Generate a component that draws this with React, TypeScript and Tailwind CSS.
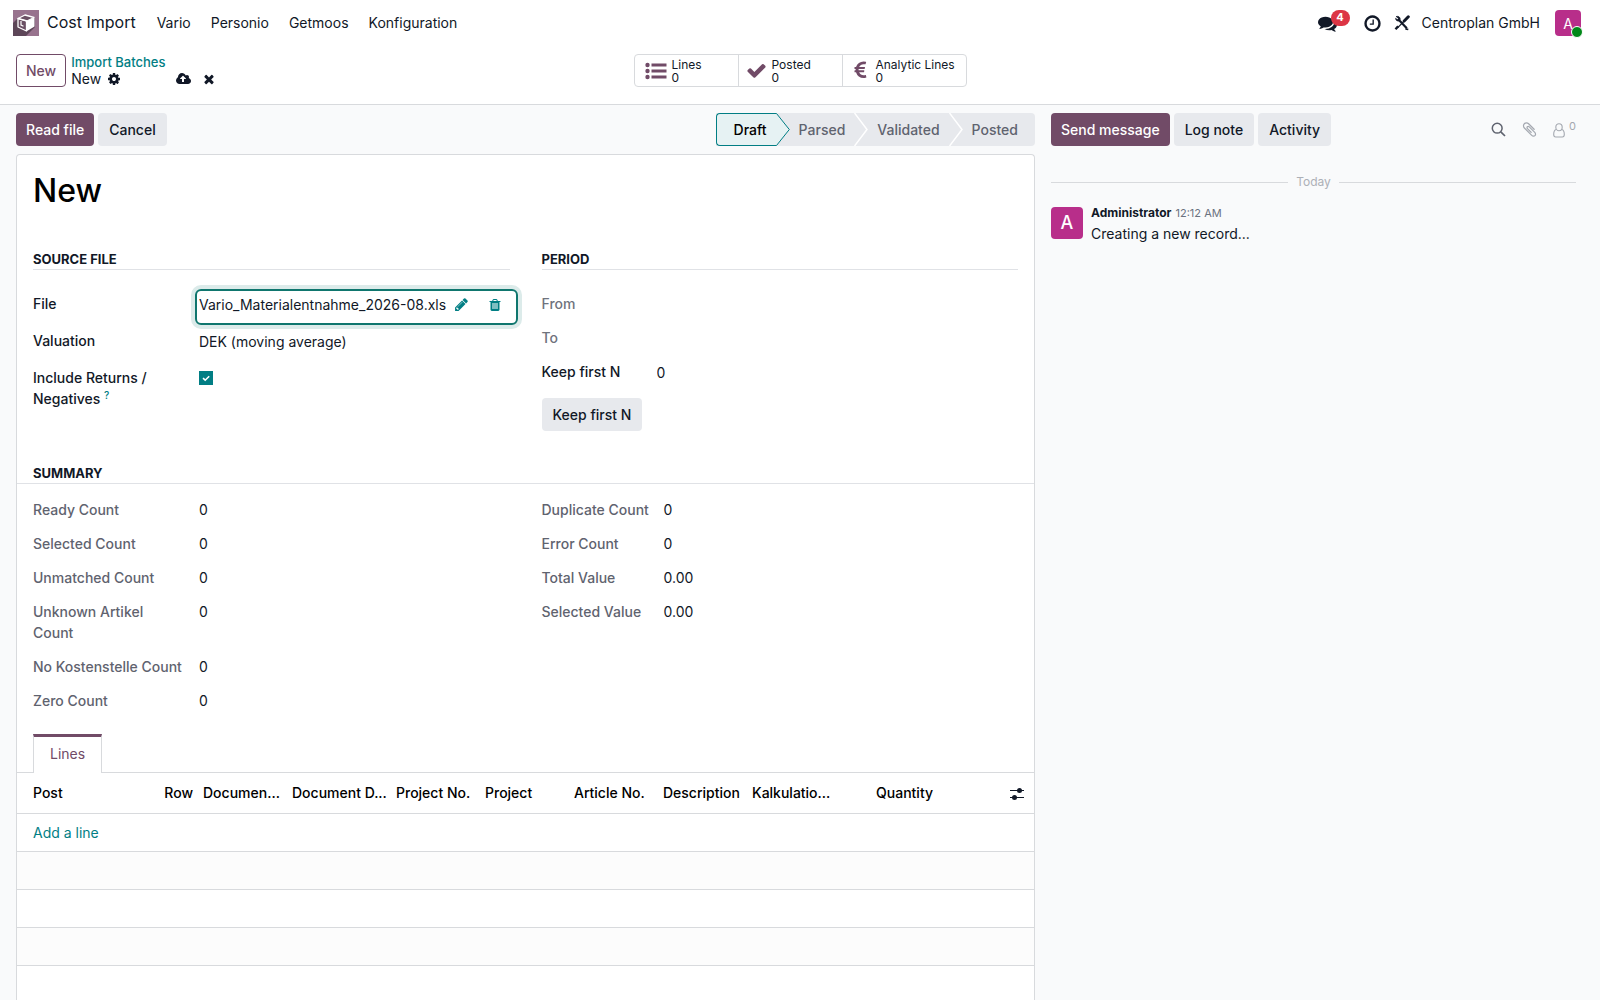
import { useState } from "react";
import type { ReactNode } from "react";
import clsx from "clsx";

type IconProps = { d: string; className?: string; box?: string };

// ------------------------------------------------
// Icons
// ------------------------------------------------
const ICONS = {
  check:
    "M1671 566q0 40-28 68l-724 724-136 136q-28 28-68 28t-68-28l-136-136-362-362q-28-28-28-68t28-68l136-136q28-28 68-28t68 28l294 295 656-657q28-28 68-28t68 28l136 136q28 28 28 68z",
  times:
    "M1490 1322q0 40-28 68l-136 136q-28 28-68 28t-68-28l-294-294-294 294q-28 28-68 28t-68-28l-136-136q-28-28-28-68t28-68l294-294-294-294q-28-28-28-68t28-68l136-136q28-28 68-28t68 28l294 294 294-294q28-28 68-28t68 28l136 136q28 28 28 68t-28 68l-294 294 294 294q28 28 28 68z",
  cog: "M1152 896q0-106-75-181t-181-75-181 75-75 181 75 181 181 75 181-75 75-181zm512-109v222q0 12-8 23t-20 13l-185 28q-19 54-39 91 35 50 107 138 10 12 10 25t-9 23q-27 37-99 108t-94 71q-12 0-26-9l-138-108q-44 23-91 38-16 136-29 186-7 28-36 28h-222q-14 0-24.5-8.500t-11.500-21.500l-28-184q-49-16-90-37l-141 107q-10 9-25 9-14 0-25-11-126-114-165-168-7-10-7-23 0-12 8-23 15-21 51-66.500t54-70.500q-27-50-41-99l-183-27q-13-2-21-12.500t-8-23.500v-222q0-12 8-23t19-13l186-28q14-46 39-92-40-57-107-138-10-12-10-24 0-10 9-23 26-36 98.500-107.500t94.500-71.500q13 0 26 10l138 107q44-23 91-38 16-136 29-186 7-28 36-28h222q14 0 24.500 8.500t11.500 21.500l28 184q49 16 90 37l142-107q9-9 24-9 13 0 25 10 129 119 165 170 7 8 7 22 0 12-8 23-15 21-51 66.500t-54 70.500q26 50 41 98l183 28q13 2 21 12.500t8 23.500z",
  pencil:
    "M491 1536l91-91-235-235-91 91v107h128v128h107zm523-928q0-22-22-22-10 0-17 7l-542 542q-7 7-7 17 0 22 22 22 10 0 17-7l542-542q7-7 7-17zm-54-192l416 416-832 832h-416v-416zm683 96q0 53-37 90l-166 166-416-416 166-165q36-38 90-38 53 0 91 38l235 234q37 39 37 91z",
  trash:
    "M704 1376v-704q0-14-9-23t-23-9h-64q-14 0-23 9t-9 23v704q0 14 9 23t23 9h64q14 0 23-9t9-23zm256 0v-704q0-14-9-23t-23-9h-64q-14 0-23 9t-9 23v704q0 14 9 23t23 9h64q14 0 23-9t9-23zm256 0v-704q0-14-9-23t-23-9h-64q-14 0-23 9t-9 23v704q0 14 9 23t23 9h64q14 0 23-9t9-23zm-544-992h448l-48-117q-7-9-17-11h-317q-10 2-17 11zm928 32v64q0 14-9 23t-23 9h-96v948q0 83-47 143.500t-113 60.500h-832q-66 0-113-58.500t-47-141.500v-952h-96q-14 0-23-9t-9-23v-64q0-14 9-23t23-9h309l70-167q15-37 54-63t79-26h320q40 0 79 26t54 63l70 167h309q14 0 23 9t9 23z",
  clock:
    "M1024 544v448q0 14-9 23t-23 9h-320q-14 0-23-9t-9-23v-64q0-14 9-23t23-9h224v-352q0-14 9-23t23-9h64q14 0 23 9t9 23zm416 352q0-148-73-273t-198-198-273-73-273 73-198 198-73 273 73 273 198 198 273 73 273-73 198-198 73-273zm224 0q0 209-103 385.500t-279.500 279.500-385.500 103-385.500-103-279.500-279.500-103-385.500 103-385.500 279.500-279.500 385.500-103 385.500 103 279.500 279.500 103 385.500z",
  comments:
    "M1408 768q0 139-94 257t-256.500 186.500-353.500 68.500q-86 0-176-16-124 88-278 128-36 9-86 16h-3q-11 0-20.500-8t-11.500-21q-1-3-1-6.500t.5-6.500 2-6l2.500-5 3.500-5.500 4-5 4.500-5 4-4.500q5-6 23-25t26-29.500 22.500-29 25-38.500 20.500-44q-124-72-195-177t-71-224q0-139 94-257t256.500-186.500 353.500-68.500 353.500 68.500 256.500 186.500 94 257zm384 256q0 120-71 224.500t-195 176.500q10 24 20.500 44t25 38.500 22.500 29 26 29.500 23 25q1 1 4 4.500t4.500 5 4 5 3.500 5.500l2.500 5 2 6 .5 6.500-1 6.500q-3 14-13 22t-22 7q-50-7-86-16-154-40-278-128-90 16-176 16-271 0-472-132 58 4 88 4 161 0 309-45t264-129q125-92 192-212t67-254q0-77-23-152 129 71 204 178t75 230z",
  cloudUpload:
    "M1280 864q0-14-9-23l-352-352q-9-9-23-9t-23 9l-351 351q-10 12-10 24 0 14 9 23t23 9h224v352q0 13 9.500 22.500t22.500 9.500h192q13 0 22.500-9.500t9.500-22.500v-352h224q13 0 22.500-9.500t9.500-22.500zm640 288q0 159-112.500 271.500t-271.500 112.500h-1088q-185 0-316.500-131.500t-131.500-316.500q0-130 70-240t188-165q-2-30-2-43 0-212 150-362t362-150q156 0 285.500 87t188.500 231q71-62 166-62 106 0 181 75t75 181q0 76-41 138 130 31 213.500 135.500t83.500 238.500z",
  paperclip:
    "M1596 1385q0 117-79 196t-196 79q-135 0-235-100l-777-776q-113-115-113-271 0-159 110-270t269-111q158 0 273 113l605 606q10 10 10 22 0 16-30.500 46.500t-46.500 30.500q-13 0-23-10l-606-607q-79-77-181-77-106 0-179 75t-73 181q0 105 76 181l776 777q63 63 145 63 64 0 106-42t42-106q0-82-63-145l-581-581q-26-24-60-24-29 0-48 19t-19 48q0 32 25 59l410 410q10 10 10 22 0 16-31 47t-47 31q-12 0-22-10l-410-410q-63-61-63-149 0-82 57-139t139-57q88 0 149 63l581 581q100 98 100 235z",
  euro: "M1360 1307l35 159q3 12-3 22.500t-17 14.500l-5 1q-4 2-10.500 3.500t-16 4.500-21.500 5.500-25.500 5-30 5-33.500 4.500-36.500 3-38.500 1q-234 0-409-130.500t-238-351.500h-95q-13 0-22.500-9.500t-9.500-22.500v-113q0-13 9.500-22.500t22.500-9.500h66q-2-57 1-105h-67q-14 0-23-9t-9-23v-114q0-14 9-23t23-9h98q67-210 243.500-338t400.500-128q102 0 194 23 11 3 20 15 6 11 3 24l-43 159q-3 13-14 19.500t-24 2.500l-4-1q-4-1-11.500-2.500l-17.500-3.500-22.500-3.500-26-3-29-2.500-29.500-1q-126 0-226 64t-150 176h468q16 0 25 12 10 12 7 26l-24 114q-5 26-32 26h-488q-3 37 0 105h459q15 0 25 12 9 12 6 27l-24 112q-2 11-11 18.500t-20 7.500h-387q48 117 149.500 185.500t228.500 68.500q18 0 36-1.500t33.500-3.500 29.500-4.500 24.500-5 18.500-4.500l12-3 5-2q13-5 26 2 12 7 15 21z",
};

function Icon({ d, className, box = "0 0 1792 1792" }: IconProps) {
  return (
    <svg viewBox={box} fill="currentColor" className={clsx("shrink-0", className)} aria-hidden="true">
      <path d={d} />
    </svg>
  );
}

function AppLogo() {
  return (
    <svg viewBox="0 0 26 26" className="size-[26px] shrink-0" aria-hidden="true">
      <rect width="26" height="26" fill="#98738e" />
      <path d="M0 13 5 8l17-1 0 10-9 9H0z" fill="#5d4658" />
      <path d="M5 8.500 13 5l8 3v9l-8 4.500L5 17z" fill="#6b5064" />
      <path d="M5 8.500 12 5l9 2.500-7 3.500z" fill="none" stroke="#fff" strokeWidth="1.300" strokeLinejoin="round" />
      <path d="M5 8.500v8.500l8.500 4V11z" fill="none" stroke="#fff" strokeWidth="1.300" strokeLinejoin="round" />
      <path d="M14 11l7.500-3.500v9L14 21z" fill="#fff" />
      <path d="M8 11v4l2.500 1.200" fill="none" stroke="#fff" strokeWidth="1.200" />
    </svg>
  );
}

function ToolsIcon() {
  return (
    <svg viewBox="0 0 16 16" className="size-4 shrink-0" fill="none" stroke="currentColor" aria-hidden="true">
      <path d="M4 4 12.800 13.300" strokeWidth="2.200" />
      <path d="M2.200 1.500 4.600 3.600 3.800 5 1.600 3.400A2.600 2.600 0 0 0 5.600 5.600 2.600 2.600 0 0 0 3.800 1.400z" fill="currentColor" strokeWidth="0.800" />
      <path d="M11.500 13.800 14.300 14.500" strokeWidth="1.800" />
      <path d="M14.300 1.800 10.200 6" strokeWidth="3" strokeLinecap="round" />
      <path d="M9.800 6.500 3.500 12.800" strokeWidth="1.200" />
      <path d="M4.200 11.200 1.500 14.300" strokeWidth="2.400" />
    </svg>
  );
}

// ------------------------------------------------
// Data
// ------------------------------------------------
const MENU = ["Vario", "Personio", "Getmoos", "Konfiguration"];

const COUNTS_LEFT = [
  { label: "Ready Count", value: "0" },
  { label: "Selected Count", value: "0" },
  { label: "Unmatched Count", value: "0" },
  { label: "Unknown Artikel Count", value: "0" },
  { label: "No Kostenstelle Count", value: "0" },
  { label: "Zero Count", value: "0" },
];

const COUNTS_RIGHT = [
  { label: "Duplicate Count", value: "0" },
  { label: "Error Count", value: "0" },
  { label: "Total Value", value: "0.00" },
  { label: "Selected Value", value: "0.00" },
];

const COLUMNS = [
  { label: "Post", className: "pl-4 text-left" },
  { label: "Row", className: "w-[89px] px-[5px] text-right" },
  { label: "Documen...", className: "w-[89px] pl-[5px] text-left" },
  { label: "Document D...", className: "w-[104px] pl-[5px] text-left" },
  { label: "Project No.", className: "w-[89px] pl-[5px] text-left" },
  { label: "Project", className: "w-[89px] pl-[5px] text-left" },
  { label: "Article No.", className: "w-[89px] pl-[5px] text-left" },
  { label: "Description", className: "w-[89px] pl-[5px] text-left" },
  { label: "Kalkulatio...", className: "w-[89px] pl-[5px] text-left" },
  { label: "Quantity", className: "w-[102px] px-[5px] text-right" },
];

// ------------------------------------------------
// Small parts
// ------------------------------------------------
function Button({ primary, children }: { primary?: boolean; children: ReactNode }) {
  return (
    <button
      className={clsx(
        "h-[33px] rounded font-medium whitespace-nowrap",
        primary ? "bg-[#714b67] px-[10px] text-white" : "bg-[#e7e9ed] px-[11px] text-[#111827]"
      )}
    >
      {children}
    </button>
  );
}

function StatButton({ icon, label, last }: { icon: ReactNode; label: string; last?: boolean }) {
  return (
    <button
      className={clsx(
        "flex items-center gap-[5px] pl-[7px] text-left text-xs leading-[13px] text-[#111827]",
        last ? "w-[123px]" : "w-[104px] border-r border-[#d8dadd]"
      )}
    >
      <span className="text-[#714b67]">{icon}</span>
      <span className="whitespace-nowrap">
        {label}
        <br />0
      </span>
    </button>
  );
}

function Chevron() {
  return (
    <svg viewBox="0 0 14 33" className="h-[33px] w-[14px] shrink-0" aria-hidden="true">
      <path d="M0.500 0 13 16.500 0.500 33" fill="none" stroke="#fff" strokeWidth="1.500" />
    </svg>
  );
}

function SectionTitle({ children }: { children: ReactNode }) {
  return (
    <h2 className="border-b border-[#e0e2e6] text-[13px] leading-5 font-bold text-[#111827] uppercase">
      {children}
    </h2>
  );
}

function ReadonlyRow({ label, value, wide }: { label: string; value: string; wide?: boolean }) {
  return (
    <div className="flex">
      <dt className={clsx("shrink-0 font-medium text-[#5f636f]", wide ? "w-[166px] pr-4" : "w-[122px]")}>
        {label}
      </dt>
      <dd>{value}</dd>
    </div>
  );
}

// ------------------------------------------------
// Page sections
// ------------------------------------------------
function Navbar() {
  return (
    <nav className="flex h-[46px] shrink-0 items-center pr-[19px] pl-[13px]">
      <AppLogo />
      <a href="#" className="ml-2 pb-[2px] text-base leading-[22px]">
        Cost Import
      </a>
      <div className="ml-[11px] flex pb-[2px]">
        {MENU.map((item) => (
          <button key={item} className="px-[10px]">
            {item}
          </button>
        ))}
      </div>
      <div className="ml-auto flex items-center">
        <button aria-label="Messages" className="relative mr-[26px]">
          <Icon d={ICONS.comments} className="size-[19px]" />
          <span className="absolute -top-1 left-[13px] flex h-4 w-[19px] items-center justify-center rounded-full bg-[#dc3545] text-[11px] font-bold text-white">
            4
          </span>
        </button>
        <button aria-label="Activities" className="mr-3">
          <Icon d={ICONS.clock} className="size-[19px]" />
        </button>
        <button aria-label="Developer tools" className="mr-3">
          <ToolsIcon />
        </button>
        <button className="mr-[15px] pb-[2px]">Centroplan GmbH</button>
        <button aria-label="User menu" className="relative flex size-[26px] items-center justify-center rounded bg-[#b82e8a] text-white">
          A
          <span className="absolute -right-[2px] -bottom-[2px] size-[12px] rounded-full border border-white bg-[#008818]" />
        </button>
      </div>
    </nav>
  );
}

function ControlPanel() {
  return (
    <div className="grid h-[59px] shrink-0 grid-cols-[1fr_auto_1fr] items-start border-b border-[#d8dadd] px-4 pt-2">
      <div className="flex">
        <button className="h-[33px] rounded border border-[#714b67] px-[9px] font-medium text-[#714b67]">
          New
        </button>
        <div className="ml-[5px] leading-4">
          <a href="#" className="block text-[13px] leading-[17px] font-medium text-[#017e84]">
            Import Batches
          </a>
          <div className="flex items-center">
            New
            <button aria-label="Settings" className="ml-[6px]">
              <Icon d={ICONS.cog} className="size-[14px]" />
            </button>
            <button aria-label="Save" className="ml-[55px]">
              <Icon d={ICONS.cloudUpload} box="0 0 1920 1792" className="h-[14px] w-[15px]" />
            </button>
            <button aria-label="Discard" className="ml-[11px]">
              <Icon d={ICONS.times} className="size-[14px]" />
            </button>
          </div>
        </div>
      </div>
      <div className="flex h-[33px] rounded border border-[#d8dadd]">
        <StatButton
          label="Lines"
          icon={
            <svg viewBox="0 0 25 18" fill="currentColor" className="h-[18px] w-[25px]" aria-hidden="true">
              <circle cx="5.500" cy="3" r="2.200" />
              <circle cx="5.500" cy="9" r="2.200" />
              <circle cx="5.500" cy="15" r="2.200" />
              <path d="M9.500 1.500h15v3h-15zM9.500 7.500h15v3h-15zM9.500 13.500h15v3h-15z" />
            </svg>
          }
        />
        <StatButton label="Posted" icon={<Icon d={ICONS.check} className="size-[21px]" />} />
        <StatButton last label="Analytic Lines" icon={<Icon d={ICONS.euro} className="size-[21px]" />} />
      </div>
    </div>
  );
}

function StatusBar() {
  return (
    <div className="flex h-[33px] rounded-r-sm bg-[#e7e9ed] font-medium text-[#5f636f]">
      <button className="rounded-l-sm border-y border-l border-[#017e84] bg-[#e6f2f3] pr-[9px] pl-[17px] text-black">
        Draft
      </button>
      <svg viewBox="0 0 14 33" className="h-[33px] w-[14px] shrink-0" aria-hidden="true">
        <path d="M0 0.500H0.500L13.300 16.500 0.500 32.500H0" fill="#e6f2f3" stroke="#017e84" />
      </svg>
      <button className="px-[9px]">Parsed</button>
      <Chevron />
      <button className="px-[9px]">Validated</button>
      <Chevron />
      <button className="pr-[17px] pl-[9px]">Posted</button>
    </div>
  );
}

function SourceFile() {
  const [includeReturns, setIncludeReturns] = useState(true);

  return (
    <section>
      <SectionTitle>Source File</SectionTitle>
      <div className="flex flex-col gap-4 pt-[23px]">
        <div className="flex h-[21px]">
          <label htmlFor="file" className="w-[166px] shrink-0 font-medium">
            File
          </label>
          <div className="-mt-1 -mr-2 -ml-1 flex h-9 flex-1 items-start rounded-md border-2 border-[#0f766e] px-[2px] pt-[2px] ring-4 ring-[#dcebea]">
            <input
              id="file"
              readOnly
              defaultValue="Vario_Materialentnahme_2026-08.xls"
              className="h-[23px] w-[255px] outline-none"
            />
            <button aria-label="Edit file" className="flex h-[23px] items-center text-[#017e84]">
              <Icon d={ICONS.pencil} className="size-[15px]" />
            </button>
            <button aria-label="Clear file" className="ml-[19px] flex h-[23px] items-center text-[#017e84]">
              <Icon d={ICONS.trash} className="size-[14px]" />
            </button>
          </div>
        </div>
        <div className="flex h-[21px]">
          <label htmlFor="valuation" className="w-[166px] shrink-0 font-medium">
            Valuation
          </label>
          <select id="valuation" className="h-[23px] flex-1 appearance-none outline-none">
            <option>DEK (moving average)</option>
          </select>
        </div>
        <div className="flex">
          <label htmlFor="returns" className="w-[166px] shrink-0 pr-10 font-medium">
            Include Returns / Negatives <sup className="text-[10px] leading-none text-[#017e84]">?</sup>
          </label>
          <span className="relative mt-1 size-[14px]">
            <input
              id="returns"
              type="checkbox"
              checked={includeReturns}
              onChange={(e) => setIncludeReturns(e.target.checked)}
              className="block size-[14px] appearance-none border border-[#017e84] checked:bg-[#017e84]"
            />
            {includeReturns && (
              <svg viewBox="0 0 14 14" className="pointer-events-none absolute inset-0 size-[14px]" aria-hidden="true">
                <path d="M4 7.200 6.200 9.200 10.200 5.200" fill="none" stroke="#fff" strokeWidth="1.600" />
              </svg>
            )}
          </span>
        </div>
      </div>
    </section>
  );
}

function Period() {
  return (
    <section>
      <SectionTitle>Period</SectionTitle>
      <div className="flex flex-col gap-[13px] pt-[23px]">
        <span className="font-medium text-[#6f737d]">From</span>
        <span className="font-medium text-[#6f737d]">To</span>
        <div className="flex h-[21px]">
          <label htmlFor="keep" className="w-[115px] shrink-0 font-medium">
            Keep first N
          </label>
          <input id="keep" defaultValue="0" className="h-[23px] min-w-0 flex-1 outline-none" />
        </div>
      </div>
      <div className="pt-4">
        <Button>Keep first N</Button>
      </div>
    </section>
  );
}

function LinesTable() {
  return (
    <>
      <div role="tablist" className="flex border-b border-[#d8dadd] px-4">
        <button
          role="tab"
          aria-selected="true"
          className="-mb-px h-[39px] border-x border-t-[3px] border-x-[#d8dadd] border-t-[#714b67] bg-white px-4 pb-[3px] text-[#714b67]"
        >
          Lines
        </button>
      </div>
      <table className="w-full table-fixed border-collapse">
        <thead>
          <tr className="h-10 border-b border-[#d8dadd] text-black">
            {COLUMNS.map((col) => (
              <th key={col.label} className={clsx("truncate font-medium", col.className)}>
                {col.label}
              </th>
            ))}
            <th className="w-[96px] pt-[2px] pr-[10px]">
              <button aria-label="Optional columns" className="ml-auto block">
                <svg viewBox="0 0 14 14" className="size-[14px] text-[#111827]" aria-hidden="true">
                  <path d="M0 3.500h14M0 10.500h14" stroke="currentColor" />
                  <circle cx="9.500" cy="3.500" r="2.500" fill="currentColor" />
                  <circle cx="4.500" cy="10.500" r="2.500" fill="currentColor" />
                </svg>
              </button>
            </th>
          </tr>
        </thead>
        <tbody>
          <tr className="h-[38px] border-b border-[#d8dadd]">
            <td colSpan={11} className="pl-4">
              <a href="#" className="text-[#017e84]">
                Add a line
              </a>
            </td>
          </tr>
          {[1, 2, 3, 4].map((row) => (
            <tr key={row} className="h-[38px] border-b border-[#d8dadd] odd:bg-white even:bg-[#fcfcfc]">
              <td colSpan={11} />
            </tr>
          ))}
        </tbody>
      </table>
    </>
  );
}

function Chatter() {
  return (
    <aside className="w-[565px] shrink-0 px-4 pt-2">
      <div className="flex items-center gap-1">
        <Button primary>Send message</Button>
        <Button>Log note</Button>
        <Button>Activity</Button>
        <div className="ml-auto flex items-center pr-2 text-[#a4a8b0]">
          <button aria-label="Search messages" className="mr-[15px] text-[#5f636f]">
            <svg viewBox="0 0 15 15" className="size-[15px]" fill="none" stroke="currentColor" aria-hidden="true">
              <circle cx="6.200" cy="6.200" r="4.900" strokeWidth="1.500" />
              <path d="M9.800 9.800 14 14" strokeWidth="1.700" />
            </svg>
          </button>
          <button aria-label="Attach files" className="mr-[15px]">
            <Icon d={ICONS.paperclip} className="size-[17px]" />
          </button>
          <button className="flex items-end pb-[2px]" aria-label="Followers">
            <svg viewBox="0 0 12 15" className="h-[15px] w-3" fill="none" stroke="currentColor" strokeWidth="1.100" aria-hidden="true">
              <ellipse cx="6" cy="4.200" rx="3.200" ry="3.500" />
              <path d="M2.900 6.500C1.300 7.200.7 9 .7 11.500c0 1.500.8 2.500 2 2.500h6.600c1.200 0 2-1 2-2.500 0-2.500-.6-4.300-2.200-5" />
            </svg>
            <span className="ml-1 pb-[6px] text-[11px] leading-3">0</span>
          </button>
        </div>
      </div>
      <div className="mt-[26px] flex items-center gap-2 pr-2 text-xs leading-5 text-[#adb0b7]">
        <hr className="flex-1 border-[#d8dadd]" />
        Today
        <hr className="flex-1 border-[#d8dadd]" />
      </div>
      <div className="mt-[15px] flex gap-2">
        <span className="flex size-8 items-center justify-center rounded bg-[#b82e8a] text-lg font-medium text-white">
          A
        </span>
        <div className="-mt-1">
          <div className="flex items-baseline gap-1 text-xs leading-5">
            <strong className="font-bold">Administrator</strong>
            <time className="text-[11px] text-[#6b7280]">12:12 AM</time>
          </div>
          <p>Creating a new record...</p>
        </div>
      </div>
    </aside>
  );
}

export default function App() {
  return (
    <div className="flex h-screen flex-col overflow-hidden bg-white font-['Inter',sans-serif] text-sm leading-[21px] text-[#111827]">
      <Navbar />
      <ControlPanel />
      <div className="flex min-h-0 flex-1 bg-[#f9fafb]">
        <main className="flex min-w-0 flex-1 flex-col pt-2 pl-4">
          <div className="flex gap-1">
            <Button primary>Read file</Button>
            <Button>Cancel</Button>
            <div className="ml-auto">
              <StatusBar />
            </div>
          </div>
          {/* Form sheet */}
          <div className="mt-2 flex-1 rounded-t border border-b-0 border-[#d8dadd] bg-white">
            <div className="px-4 pt-4">
              <h1 className="text-[32px] leading-10 font-medium text-black">New</h1>
              <div className="mt-[38px] grid grid-cols-2 gap-8">
                <SourceFile />
                <Period />
              </div>
            </div>
            <h2 className="mt-8 border-b border-[#e0e2e6] pl-4 text-[13px] leading-5 font-bold uppercase">
              Summary
            </h2>
            <div className="grid grid-cols-2 gap-8 px-4 pt-[15px] pb-[23px]">
              <dl className="flex flex-col gap-[13px]">
                {COUNTS_LEFT.map((row) => (
                  <ReadonlyRow key={row.label} wide {...row} />
                ))}
              </dl>
              <dl className="flex flex-col gap-[13px]">
                {COUNTS_RIGHT.map((row) => (
                  <ReadonlyRow key={row.label} {...row} />
                ))}
              </dl>
            </div>
            <LinesTable />
          </div>
        </main>
        <Chatter />
      </div>
    </div>
  );
}
